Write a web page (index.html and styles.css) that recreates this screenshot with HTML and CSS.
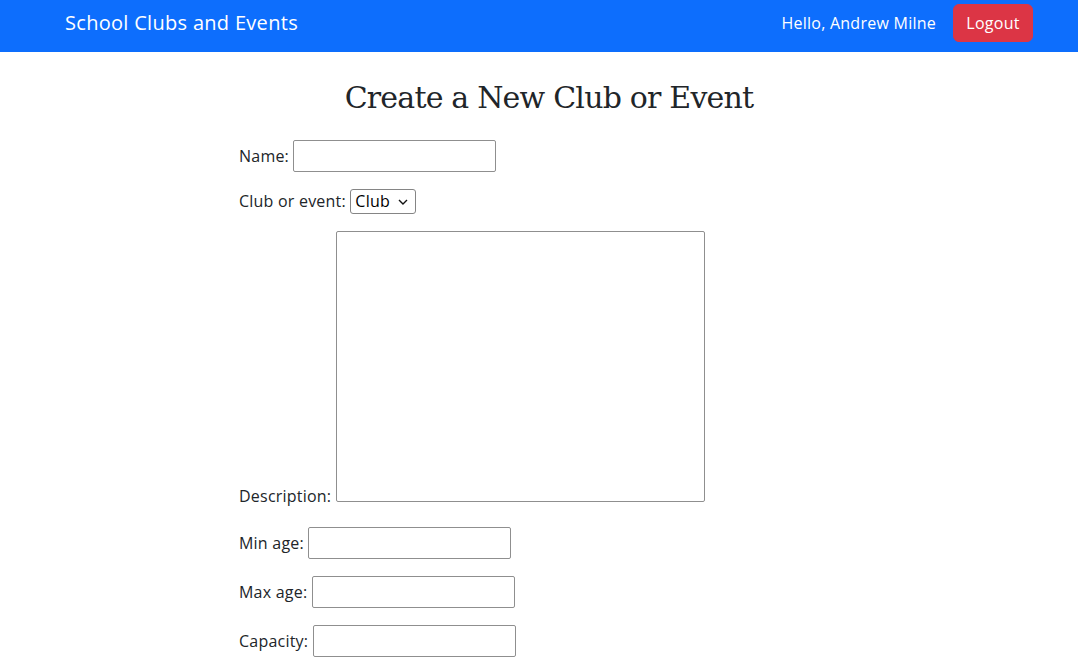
FILE: index.html
```html
<!DOCTYPE html>
<html lang="en">
<head>
<meta charset="utf-8">
<title>Create a New Club or Event</title>
<link rel="stylesheet" href="styles.css">
</head>
<body>
<nav class="navbar">
  <a class="brand" href="#">School Clubs and Events</a>
  <div class="nav-right">
    <span class="hello">Hello, Andrew Milne</span>
    <button class="btn-logout" type="button">Logout</button>
  </div>
</nav>
<main class="page">
  <h1 class="title">Create a New Club or Event</h1>
  <form class="club-form">
    <p class="row"><label for="name">Name:</label> <input id="name" class="field" type="text"></p>
    <p class="row"><label for="kind">Club or event:</label> <select id="kind" class="picker"><option>Club</option><option>Event</option></select></p>
    <p class="row row-desc"><label for="desc">Description:</label> <textarea id="desc" class="area"></textarea></p>
    <p class="row"><label for="minage">Min age:</label> <input id="minage" class="field" type="text"></p>
    <p class="row"><label for="maxage">Max age:</label> <input id="maxage" class="field" type="text"></p>
    <p class="row"><label for="cap">Capacity:</label> <input id="cap" class="field" type="text"></p>
  </form>
</main>
</body>
</html>
```

FILE: styles.css
```css
* { box-sizing: border-box; }
html, body { margin: 0; padding: 0; }
body {
  font-family: "Open Sans", "Noto Sans", "Liberation Sans", sans-serif;
  font-size: 16px;
  line-height: 1.5;
  letter-spacing: 0.22px;
  color: #212529;
  background: #fff;
  overflow: hidden;
}
.navbar {
  background: #0d6efd;
  height: 52px;
  display: flex;
  align-items: center;
  justify-content: space-between;
  padding: 0 45px 7px 65px;
}
.brand {
  color: #fff;
  text-decoration: none;
  font-size: 20px;
  letter-spacing: 0.3px;
  line-height: 30px;
}
.nav-right {
  display: flex;
  align-items: center;
  gap: 17px;
}
.hello { color: #fff; font-size: 16px; letter-spacing: 0.25px; }
.btn-logout {
  font-family: inherit;
  font-size: 16px;
  letter-spacing: 0.25px;
  line-height: 24px;
  color: #fff;
  background: #dc3545;
  border: 1px solid #dc3545;
  border-radius: 6px;
  padding: 6px 0;
  height: 38px;
  width: 80px;
}
.page { padding: 0 0 0 239px; }
.title {
  font-family: "DejaVu Serif", "Liberation Serif", serif;
  font-weight: 400;
  font-size: 30px;
  letter-spacing: -0.8px;
  line-height: 1.2;
  margin: 28px 0 24px;
  text-align: center;
  width: 620px;
}
.club-form { margin: 0; }
.row { margin: 0 0 17px; }
.row-desc { margin-bottom: 19px; }
.field {
  width: 203px;
  height: 32px;
  border: 1px solid #8f8f8f;
  border-radius: 2px;
  font: inherit;
  padding: 1px 2px;
  vertical-align: baseline;
}
.picker {
  -webkit-appearance: none;
  appearance: none;
  width: 66px;
  height: 25px;
  font: inherit;
  font-size: 16px;
  line-height: 21px;
  letter-spacing: 0.2px;
  padding: 0 0 0 4px;
  border: 1px solid #858585;
  border-radius: 3px;
  color: #000;
  background: #fff url("data:image/svg+xml,%3Csvg xmlns='http://www.w3.org/2000/svg' width='10' height='6' viewBox='0 0 10 6'%3E%3Cpath d='M1 1l4 4 4-4' fill='none' stroke='%23111' stroke-width='1.4'/%3E%3C/svg%3E") no-repeat right 7px center;
}
.area {
  width: 369px;
  height: 271px;
  border: 1px solid #8f8f8f;
  border-radius: 2px;
  font: inherit;
  resize: none;
}
```
